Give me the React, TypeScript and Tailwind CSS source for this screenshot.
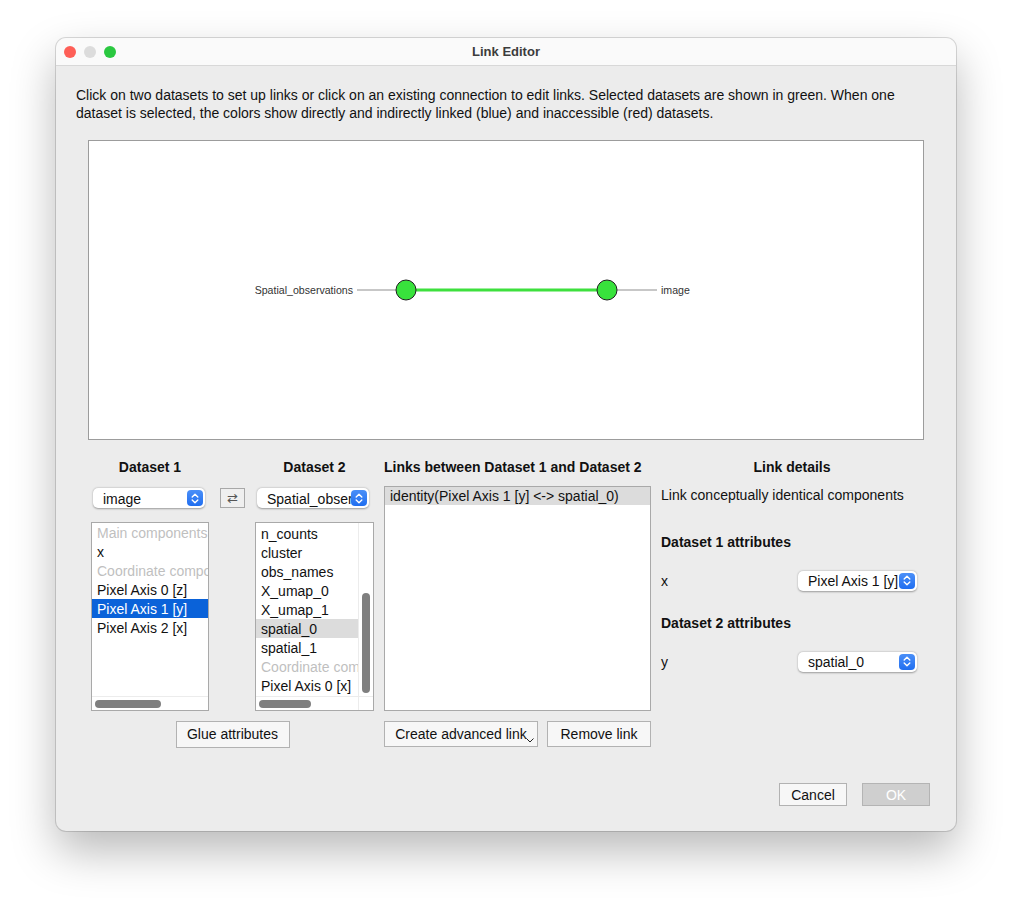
import React from 'react'

const font = "font-['Liberation_Sans',Arial,sans-serif]"
const btn = "flex items-center justify-center bg-[#f7f7f7] border border-[#b2b2b2] text-[14px] text-[#111]"

function Stepper() {
  return (
    <div className="w-[16px] h-[16px] rounded-[4px] bg-gradient-to-b from-[#4a8ff8] to-[#1f6ef0] flex items-center justify-center shrink-0">
      <svg width="8" height="11" viewBox="0 0 8 11" fill="none" stroke="white" strokeWidth="1.4" strokeLinecap="round" strokeLinejoin="round">
        <path d="M1.2 4 L4 1.3 L6.8 4" />
        <path d="M1.2 7 L4 9.7 L6.8 7" />
      </svg>
    </div>
  )
}

function Combo({ label, width }: { label: string; width: string }) {
  return (
    <div className={`${width} h-[20px] bg-white rounded-[5px] shadow-[0_0.5px_2px_rgba(0,0,0,0.35)] flex items-center pl-[10px] pr-[2px] overflow-hidden`}>
      <span className="flex-1 overflow-hidden whitespace-nowrap text-[14px] text-[#111] leading-[20px] pt-[1px]">{label}</span>
      <Stepper />
    </div>
  )
}

type Row = { t: string; kind?: 'head' | 'sel' | 'hi' }

function ListBox({ rows, width, vscroll, thumbW, offset }: { rows: Row[]; width: string; vscroll?: boolean; thumbW: string; offset?: string }) {
  return (
    <div className={`${width} h-[189px] bg-white border border-[#a9a9a9] flex flex-col`}>
      <div className="flex flex-1 min-h-0">
        <div className={`flex-1 min-w-0 overflow-hidden ${offset ?? ''}`}>
          {rows.map((r, i) => (
            <div
              key={i}
              className={`h-[19px] leading-[20px] pl-[5px] whitespace-nowrap overflow-hidden text-[14px] ${
                r.kind === 'head' ? 'text-[#bfbfbf]' : r.kind === 'sel' ? 'bg-[#0a62d9] text-white' : r.kind === 'hi' ? 'bg-[#dcdcdc] text-[#111]' : 'text-[#111]'
              }`}
            >
              {r.t}
            </div>
          ))}
        </div>
        {vscroll && (
          <div className="w-[15px] border-l border-[#ececec] flex justify-center pt-[70px]">
            <div className="w-[8px] h-[100px] rounded-full bg-[#7f7f7f]" />
          </div>
        )}
      </div>
      <div className="h-[14px] border-t border-[#ececec] flex">
        <div className="flex-1 flex items-center pl-[3px]">
          <div className={`${thumbW} h-[8px] rounded-full bg-[#7f7f7f]`} />
        </div>
        {vscroll && <div className="w-[15px] border-l border-[#ececec]" />}
      </div>
    </div>
  )
}

function Graph() {
  return (
    <svg width="834" height="298" viewBox="0 0 834 298">
      <line x1="268" y1="149" x2="568" y2="149" stroke="#b5b5b5" strokeWidth="1.5" />
      <line x1="327" y1="149" x2="508" y2="149" stroke="#3ee03e" strokeWidth="3" />
      <circle cx="317" cy="149" r="10" fill="#38e23c" stroke="#1e1e1e" strokeWidth="1" />
      <circle cx="518" cy="149" r="10" fill="#38e23c" stroke="#1e1e1e" strokeWidth="1" />
      <text x="264" y="153" textAnchor="end" fontSize="10.6" fill="#333" fontFamily="Liberation Sans, Arial, sans-serif">Spatial_observations</text>
      <text x="572" y="153" fontSize="10.6" fill="#333" fontFamily="Liberation Sans, Arial, sans-serif">image</text>
    </svg>
  )
}

export default function App() {
  const list1: Row[] = [
    { t: 'Main components', kind: 'head' },
    { t: 'x' },
    { t: 'Coordinate components', kind: 'head' },
    { t: 'Pixel Axis 0 [z]' },
    { t: 'Pixel Axis 1 [y]', kind: 'sel' },
    { t: 'Pixel Axis 2 [x]' },
  ]
  const list2: Row[] = [
    { t: 'n_counts' },
    { t: 'cluster' },
    { t: 'obs_names' },
    { t: 'X_umap_0' },
    { t: 'X_umap_1' },
    { t: 'spatial_0', kind: 'hi' },
    { t: 'spatial_1' },
    { t: 'Coordinate components', kind: 'head' },
    { t: 'Pixel Axis 0 [x]' },
  ]

  return (
    <div className={`min-h-[906px] bg-white pt-[38px] pl-[56px] ${font}`}>
      <div className="w-[900px] h-[793px] rounded-[10px] overflow-hidden bg-[#ececec] shadow-[0_0_0_1px_rgba(0,0,0,0.14),0_20px_45px_rgba(0,0,0,0.28)] flex flex-col">
        {/* title bar */}
        <div className="h-[28px] bg-[#fafafa] border-b border-[#d8d8d8] flex items-center relative">
          <div className="flex gap-[8px] pl-[8px]">
            <div className="w-[12px] h-[12px] rounded-full bg-[#fe5f57]" />
            <div className="w-[12px] h-[12px] rounded-full bg-[#dcdcdc]" />
            <div className="w-[12px] h-[12px] rounded-full bg-[#2ac840]" />
          </div>
          <div className="absolute inset-0 flex items-center justify-center text-[13px] font-bold text-[#3c3c3c]">Link Editor</div>
        </div>

        {/* body */}
        <div className="flex flex-col pt-[20px]">
          <p className="pl-[20px] text-[14px] leading-[18px] text-[#111]">
            Click on two datasets to set up links or click on an existing connection to edit links. Selected datasets are shown in green. When one
            <br />
            dataset is selected, the colors show directly and indirectly linked (blue) and inaccessible (red) datasets.
          </p>

          <div className="ml-[32px] mt-[18px] w-[836px] h-[300px] bg-white border border-[#9c9c9c]">
            <Graph />
          </div>

          <div className="flex pl-[35px] mt-[18px] text-[14px] text-[#111]">
            {/* datasets 1 & 2 */}
            <div className="flex flex-col w-[283px]">
              <div className="flex">
                <div className="flex flex-col w-[118px]">
                  <div className="h-[18px] leading-[18px] text-center font-bold">Dataset 1</div>
                  <div className="mt-[12px] ml-[2px]">
                    <Combo label="image" width="w-[112px]" />
                  </div>
                  <div className="mt-[14px]">
                    <ListBox rows={list1} width="w-[118px]" thumbW="w-[66px]" />
                  </div>
                </div>
                <div className="w-[46px] flex justify-center pt-[30px]">
                  <div className="w-[25px] h-[20px] border border-[#a8a8a8] bg-[#efefef] flex items-center justify-center text-[13px] text-[#555] leading-none">⇄</div>
                </div>
                <div className="flex flex-col w-[119px]">
                  <div className="h-[18px] leading-[18px] text-center font-bold">Dataset 2</div>
                  <div className="mt-[12px] ml-[2px]">
                    <Combo label="Spatial_observations" width="w-[112px]" />
                  </div>
                  <div className="mt-[14px]">
                    <ListBox rows={list2} width="w-[119px]" vscroll thumbW="w-[52px]" offset="pt-[1px]" />
                  </div>
                </div>
              </div>
              <div className="flex justify-center mt-[10px]">
                <div className={`${btn} w-[114px] h-[27px]`}>Glue attributes</div>
              </div>
            </div>

            {/* links */}
            <div className="flex flex-col w-[267px] ml-[10px]">
              <div className="h-[18px] leading-[18px] font-bold whitespace-nowrap">Links between Dataset 1 and Dataset 2</div>
              <div className="mt-[10px] h-[225px] bg-white border border-[#a9a9a9]">
                <div className="h-[18px] leading-[19px] bg-[#dcdcdc] pl-[5px] whitespace-nowrap">identity(Pixel Axis 1 [y] &lt;-&gt; spatial_0)</div>
              </div>
              <div className="flex mt-[10px]">
                <div className={`${btn} w-[154px] h-[26px] relative`}>
                  Create advanced link
                  <svg className="absolute right-[3px] bottom-[3px]" width="8" height="5" viewBox="0 0 8 5" fill="none" stroke="#222" strokeWidth="1">
                    <path d="M0.5 0.5 L4 4 L7.5 0.5" />
                  </svg>
                </div>
                <div className={`${btn} w-[104px] h-[26px] ml-[9px]`}>Remove link</div>
              </div>
            </div>

            {/* link details */}
            <div className="flex flex-col w-[262px] ml-[10px]">
              <div className="h-[18px] leading-[18px] text-center font-bold">Link details</div>
              <div className="mt-[10px] h-[18px] leading-[18px] whitespace-nowrap">Link conceptually identical components</div>
              <div className="mt-[29px] h-[18px] leading-[18px] font-bold">Dataset 1 attributes</div>
              <div className="mt-[19px] flex items-center justify-between pr-[6px]">
                <span className="leading-[20px] pt-[1px]">x</span>
                <Combo label="Pixel Axis 1 [y]" width="w-[119px]" />
              </div>
              <div className="mt-[23px] h-[18px] leading-[18px] font-bold">Dataset 2 attributes</div>
              <div className="mt-[19px] flex items-center justify-between pr-[6px]">
                <span className="leading-[20px] pt-[1px]">y</span>
                <Combo label="spatial_0" width="w-[119px]" />
              </div>
            </div>
          </div>

          <div className="flex justify-end pr-[26px] mt-[35px]">
            <div className={`${btn} w-[68px] h-[23px] pt-[1px]`}>Cancel</div>
            <div className="w-[68px] h-[23px] ml-[15px] pt-[1px] flex items-center justify-center bg-[#cfcfcf] border border-[#b4b4b4] text-[14px] text-white">OK</div>
          </div>
        </div>
      </div>
    </div>
  )
}
